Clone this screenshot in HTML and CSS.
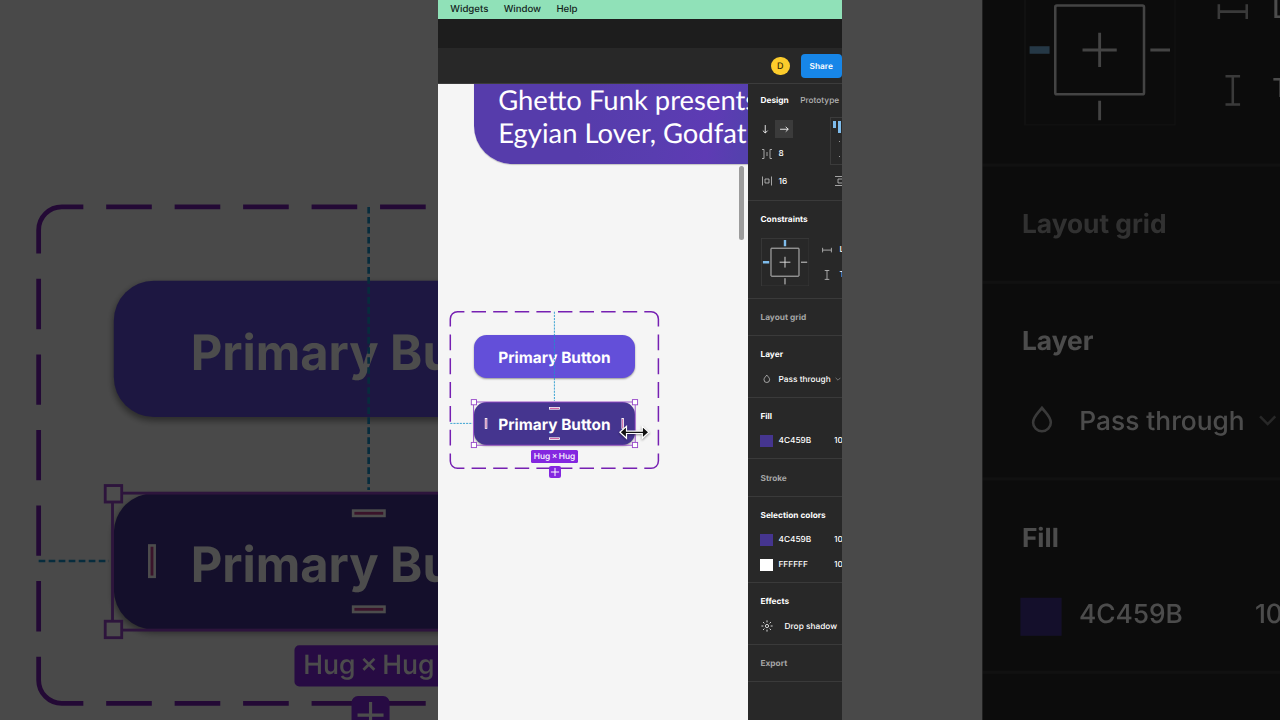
FILE: index.html
```html
<!DOCTYPE html>
<html lang="en">
<head>
    <meta charset="UTF-8">
    <meta name="viewport" content="width=device-width, initial-scale=1.0">
    <title>Primary Button</title>
    <link rel="stylesheet" href="styles.css">
</head>
<body>
    <div class="backdrop"></div>
    <div class="screen">
        <div class="menubar">
            <span class="m1">Widgets</span>
            <span class="m2">Window</span>
            <span class="m3">Help</span>
        </div>
        <div class="tabbar"></div>
        <div class="toolbar">
            <span class="avatar">D</span>
            <span class="share">Share</span>
        </div>
        <div class="main">
            <div class="canvas">
                <div class="card">
                    <p>Ghetto Funk presents</p>
                    <p>Egyian Lover, Godfather</p>
                </div>
                <div class="scroll"></div>
                <div class="btn first">Primary Button</div>
                <div class="btn second">Primary Button</div>
                <!-- same coordinates as .screen -->
                <svg class="marks" width="310" height="636" viewBox="0 84 310 636" fill="none">
                    <g stroke="#7620b2" stroke-width="1.5">
                        <path d="M12.3 326.4V319a7.3 7.3 0 0 1 7.3-7.3H26.4M206.3 311.7h6.8a7.3 7.3 0 0 1 7.3 7.3v7.4M220.4 453.6v7.4a7.3 7.3 0 0 1-7.3 7.3h-6.8M26.4 468.3h-6.8a7.3 7.3 0 0 1-7.3-7.3v-7.4"/>
                        <path d="M33.6 311.7H200M33.6 468.3H200" stroke-dasharray="14.4 7.2"/>
                        <path d="M12.3 334.4V446M220.4 334.4V446" stroke-dasharray="15.9 7.93"/>
                    </g>
                    <path d="M116.4 311.7V401M12.3 423.4H34.5" stroke="#1a95cc" stroke-width=".85" stroke-dasharray="2.1 1.06"/>
                    <rect x="35.6" y="402" width="161.6" height="43.2" stroke="#9645c8" stroke-width=".9"/>
                    <g fill="#fff" stroke="#9645c8" stroke-width=".9">
                        <rect x="33.3" y="399.6" width="5.2" height="5.2"/>
                        <rect x="194.4" y="399.6" width="5.2" height="5.2"/>
                        <rect x="33.3" y="442.4" width="5.2" height="5.2"/>
                        <rect x="194.4" y="442.4" width="5.2" height="5.2"/>
                    </g>
                    <g fill="#c3428c" stroke="#fff" stroke-width=".8">
                        <rect x="111.5" y="407.5" width="9.9" height="1.7"/>
                        <rect x="111.5" y="437.8" width="9.9" height="1.7"/>
                        <rect x="47.2" y="418.5" width="1.7" height="9.9"/>
                        <rect x="183.9" y="418.5" width="1.7" height="9.9"/>
                    </g>
                    <path class="cursor" d="M181.9 432.3l6.6-6v4.8h15.8v-4.8l6.6 6-6.6 6v-4.8h-15.8v4.8z" fill="#111" stroke="#fff" stroke-width="1.2"/>
                </svg>
                <div class="hug">Hug × Hug</div>
                <svg class="add" viewBox="0 0 12 12"><path d="M6 1.9v8.2M1.9 6h8.2" stroke="#fff" stroke-width="1"/></svg>
            </div>
            <div class="panel">
                <div class="section layout">
                    <div class="tabs"><b>Design</b><span>Prototype</span></div>
                    <div class="cols">
                        <div class="left">
                            <div class="row">
                                <svg class="arrow" viewBox="0 0 10 10"><path d="M5 1v7.6M2.7 6.3L5 8.6l2.3-2.3"/></svg>
                                <div class="on"><svg viewBox="0 0 10 10"><path d="M1 5h7.8M6.4 2.7L8.8 5 6.4 7.3"/></svg></div>
                            </div>
                            <div class="row">
                                <svg class="ico" viewBox="0 0 12 12"><path d="M1 1.5h2v9H1M11 1.5H9v9h2M6 4v4"/></svg>
                                <span>8</span>
                            </div>
                            <div class="row last">
                                <svg class="ico" viewBox="0 0 12 12"><path d="M1.5 1.5v9M10.5 1.5v9M4 4h4v4H4z"/></svg>
                                <span>16</span>
                            </div>
                        </div>
                        <div class="right">
                            <div class="align">
                                <i></i><i class="tall"></i>
                                <em></em><em class="low"></em>
                            </div>
                            <svg class="ico" viewBox="0 0 12 12"><path d="M1 1.5h10M1 10.5h10M4 4h5v4H4z"/></svg>
                        </div>
                    </div>
                </div>
                <div class="section cons">
                    <h4>Constraints</h4>
                    <div class="cols">
                        <svg class="pins" viewBox="0 0 48.4 48.4" fill="none">
                            <rect x=".4" y=".4" width="47.6" height="47.6" stroke="#3b3b3b" stroke-width=".8"/>
                            <rect x="10" y="10.2" width="28" height="28" rx=".5" stroke="#e4e4e4"/>
                            <path d="M24 18.8v10.8M18.6 24.2h10.8M40 24.2h6.2M24 40.2v6.2" stroke="#e4e4e4" stroke-width=".9"/>
                            <path d="M24 2v6.2M1.9 24.2h6.3" stroke="#7ebcec" stroke-width="2.4"/>
                        </svg>
                        <div class="axes">
                            <div><svg class="ico" viewBox="0 0 12 12"><path d="M1.6 3.8v4.6M10.4 3.8v4.6M1.6 6.1h8.8"/></svg><span>Left</span></div>
                            <div><svg class="ico" viewBox="0 0 12 12"><path d="M3.7 1.5h4.6M3.7 10.4h4.6M6 1.5v8.9"/></svg><span>Top</span></div>
                        </div>
                    </div>
                </div>
                <div class="section empty"><h4>Layout grid</h4></div>
                <div class="section">
                    <h4>Layer</h4>
                    <div class="row">
                        <svg class="ico" viewBox="0 0 12 12"><path d="M5.8 2.1C4.6 3.7 3 4.9 3 6.7a2.8 2.8 0 0 0 5.6 0C8.6 4.9 7 3.7 5.8 2.1z"/></svg>
                        <span>Pass through</span>
                        <svg class="chev" viewBox="0 0 6 4"><path d="M.6.8L3 3.2 5.4.8"/></svg>
                    </div>
                </div>
                <div class="section">
                    <h4>Fill</h4>
                    <div class="row"><i class="swatch"></i><span class="hex">4C459B</span><span>100%</span></div>
                </div>
                <div class="section empty"><h4>Stroke</h4></div>
                <div class="section">
                    <h4>Selection colors</h4>
                    <div class="row"><i class="swatch"></i><span class="hex">4C459B</span><span>100%</span></div>
                    <div class="row"><i class="swatch white"></i><span class="hex">FFFFFF</span><span>100%</span></div>
                </div>
                <div class="section">
                    <h4>Effects</h4>
                    <div class="row effect">
                        <svg class="ico" viewBox="0 0 12 12"><circle cx="6" cy="6" r="1.6"/><path d="M6 .4v2M6 9.6v2M.4 6h2M9.6 6h2M2 2l1.4 1.4M8.6 8.6L10 10M10 2L8.6 3.4M3.4 8.6L2 10"/></svg>
                        <span>Drop shadow</span>
                    </div>
                </div>
                <div class="section empty"><h4>Export</h4></div>
            </div>
        </div>
    </div>
    <script>
        // enlarged dark copy of the screen behind it
        var screenEl = document.querySelector('.screen');
        document.querySelector('.backdrop').appendChild(screenEl.cloneNode(true));
    </script>
</body>
</html>
```
FILE: styles.css
```css
*{
    margin: 0;
    padding: 0;
    box-sizing: border-box;
}
body{
    width: 1280px;
    height: 720px;
    overflow: hidden;
    position: relative;
    background: #000;
    display: flex;
    justify-content: center;
    font-family: Inter, "Liberation Sans", sans-serif;
    text-rendering: geometricPrecision;
}
.backdrop{
    position: absolute;
    inset: 0;
    overflow: hidden;
    display: flex;
    justify-content: center;
}
.backdrop:after{
    content: "";
    position: absolute;
    inset: 0;
    background: rgba(0,0,0,.7);
}
.backdrop .screen{
    transform: scale(3.17);
}
.screen{
    width: 404px;
    height: 720px;
    flex: none;
    overflow: hidden;
    position: relative;
    background: #282828;
    color: #fff;
    font-size: 8.3px;
    font-weight: 500;
    display: flex;
    flex-direction: column;
}
.menubar{
    height: 18.7px;
    flex: none;
    background: #90e1b8;
    color: #13241c;
    padding: .9px 0 0 12.3px;
    display: flex;
    align-items: center;
    gap: 15.3px;
    font-size: 9.65px;
}
.tabbar{
    height: 29.3px;
    flex: none;
    background: #1d1d1d;
}
.toolbar{
    height: 36.5px;
    flex: none;
    display: flex;
    align-items: center;
    justify-content: flex-end;
    gap: 11px;
    padding-top: .8px;
    border-bottom: 1px solid #3c3c3c;
}
.avatar{
    width: 18.6px;
    height: 18.6px;
    border-radius: 50%;
    background: #fccc2c;
    color: #3a2d05;
    font-size: 9px;
    line-height: 20px;
    text-align: center;
}
.share{
    width: 41.5px;
    height: 24.4px;
    border-radius: 4px;
    background: #1786e8;
    font-weight: 600;
    line-height: 26.6px;
    text-align: center;
}
.main{
    flex: 1;
    display: flex;
    min-height: 0;
}
.canvas{
    width: 309.7px;
    flex: none;
    position: relative;
    overflow: hidden;
    background: #f5f5f5;
}
.card{
    position: absolute;
    left: 36px;
    top: -60px;
    width: 400px;
    height: 139.8px;
    padding: 58.3px 0 0 24.2px;
    border-radius: 38px;
    background: linear-gradient(100deg, #563cab 30%, #593db0 48%, #5e3bb4 60%, #5540ae 68%);
    font: 27.4px/33.4px Lato, sans-serif;
    white-space: nowrap;
    box-shadow: 0 1px 1px rgba(0,0,0,.2);
}
.scroll{
    position: absolute;
    left: 301px;
    top: 81.6px;
    width: 4.8px;
    height: 74px;
    border-radius: 3px;
    background: #9c9c9c;
}
.btn{
    position: absolute;
    left: 36px;
    width: 160.8px;
    height: 42.8px;
    border-radius: 12.6px;
    background: #634fd9;
    font-size: 15.4px;
    font-weight: 700;
    line-height: 45.2px;
    text-align: center;
    box-shadow: 0 1px 2px rgba(0,0,0,.4);
}
.first{
    top: 251px;
}
.second{
    top: 317.7px;
    background: #45358f;
}
.marks{
    position: absolute;
    left: 0;
    top: -.5px;
}
.cursor{
    filter: drop-shadow(0 1px 1px rgba(0,0,0,.4));
}
.hug{
    position: absolute;
    left: 93px;
    top: 366px;
    width: 47px;
    height: 13px;
    border-radius: 1.5px;
    background: #8427e0;
    font-size: 8.4px;
    line-height: 15.4px;
    text-align: center;
    word-spacing: -.8px;
}
.add{
    position: absolute;
    left: 110.6px;
    top: 381.5px;
    width: 12px;
    height: 12px;
    border-radius: 2px;
    background: #8427e0;
}
.panel{
    flex: 1;
    min-width: 0;
    overflow: hidden;
    background: #282828;
    white-space: nowrap;
}
.section{
    padding: 6.3px 0 6.1px 12.8px;
    border-bottom: 1px solid #3a3a3a;
}
.section h4{
    height: 24.7px;
    line-height: 26.2px;
    font-size: 8.3px;
    font-weight: 650;
}
.section.empty{
    height: 37.2px;
    color: #a5a5a5;
}
.row{
    height: 24.7px;
    display: flex;
    align-items: center;
}
.row span{
    padding-top: .8px;
}
.section > .row:last-child{
    margin-bottom: -1px;
}
svg.ico{
    width: 12px;
    height: 12px;
    flex: none;
    margin-left: .5px;
    margin-right: 5.6px;
}
.panel svg{
    fill: none;
    stroke: #c4c4c4;
    stroke-width: .8;
}
.layout{
    height: 116.2px;
    padding-top: 0;
}
.tabs{
    height: 32.4px;
    line-height: 34.6px;
    display: flex;
    gap: 11.5px;
}
.tabs b{
    font-weight: 650;
}
.tabs span{
    color: #b3b3b3;
}
.cols{
    display: flex;
}
.left{
    width: 69.8px;
    flex: none;
}
.last{
    margin-top: 2.8px;
}
.arrow, .on svg{
    width: 10.5px;
    height: 10.5px;
}
.panel .arrow, .panel .on svg{
    stroke: #fff;
}
.on{
    width: 18.3px;
    height: 18.3px;
    margin-left: 4px;
    display: flex;
    align-items: center;
    justify-content: center;
    background: #3b3b3b;
}
.align{
    width: 48px;
    height: 48.5px;
    padding: 2.8px 0 0 2px;
    border: 1px solid #3b3b3b;
    display: grid;
    grid-template-columns: 3.2px 3.6px;
    grid-template-rows: 20px 15px 10px;
    column-gap: 1.2px;
}
.align i{
    height: 7.5px;
    background: #7ebcec;
}
.align .tall{
    height: 12.2px;
}
.align em{
    grid-column: 2;
    width: 1px;
    height: 1px;
    margin-left: 1px;
    background: #999;
}
.right > svg.ico{
    margin: 9.9px 0 0 3.5px;
}
.cons{
    height: 98px;
}
.cons .cols{
    margin-top: 6.1px;
}
.pins{
    width: 48.4px;
    height: 48.4px;
    flex: none;
    margin-left: .4px;
}
.axes{
    padding-left: 11.3px;
}
.axes div{
    height: 24.6px;
    display: flex;
    align-items: center;
}
.axes span{
    padding: .8px 0 0 .8px;
}
.chev{
    width: 6px;
    height: 4px;
    flex: none;
    margin-left: 4px;
    opacity: .6;
}
.swatch{
    width: 12.2px;
    height: 12.2px;
    flex: none;
    margin-right: 5.8px;
    background: #45358f;
}
.white{
    background: #fff;
}
.hex{
    width: 55.5px;
    flex: none;
}
.effect svg.ico{
    margin-right: 11.6px;
    stroke: #fff;
}
```
